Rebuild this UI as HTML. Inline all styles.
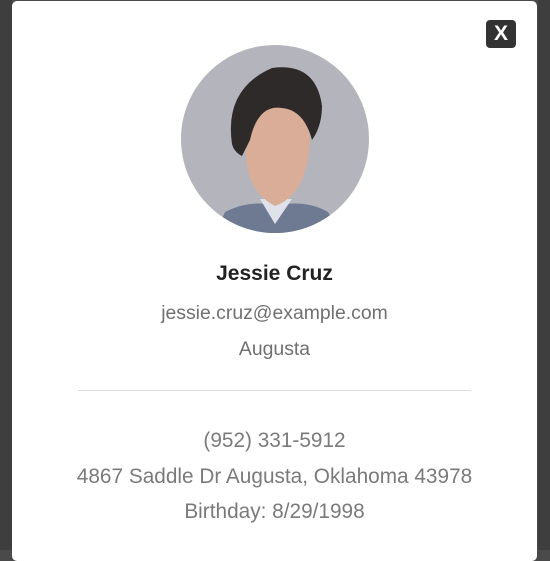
<!DOCTYPE html>
<html><head><style>
html,body{margin:0;padding:0;width:550px;height:550px;overflow:hidden;background:#4a4a4a;font-family:"Liberation Sans",sans-serif;}
.modal{position:absolute;left:12px;top:1px;width:525px;height:560px;background:#fff;border-radius:5px;}
.close{position:absolute;left:474px;top:19px;width:30px;height:28px;background:#333;border-radius:4px;color:#fff;font-weight:bold;font-size:21px;text-align:center;line-height:28px;}
.t{position:absolute;left:0;width:525px;text-align:center;}
</style></head><body>
<div style="position:absolute;left:0;top:0;width:12px;height:550px;background:#3e3e3e"></div>
<div class="modal">
<div class="close">X</div>
<svg style="position:absolute;left:168px;top:43px" width="190" height="190" viewBox="0 0 190 190">
<defs><clipPath id="c"><circle cx="95" cy="95" r="94"/></clipPath></defs>
<g clip-path="url(#c)">
<rect width="190" height="190" fill="#b4b5bc"/>
<path d="M35 190 L45 168 Q70 155 95 162 Q125 155 148 168 L160 190Z" fill="#6d7a92"/>
<path d="M80 155 L95 180 L112 155Z" fill="#dfe2ea"/>
<path d="M66 95 Q62 145 95 162 Q128 150 130 95 Q126 60 98 58 Q70 60 66 95Z" fill="#d9ad98"/>
<path d="M52 100 Q44 45 92 24 Q136 18 142 62 Q142 82 132 96 Q124 66 102 64 Q78 60 70 96 L62 112 Q54 108 52 100Z" fill="#2f2a2a"/>
</g></svg>
<div class="t" style="top:261px;font-size:21px;font-weight:bold;color:#222">Jessie Cruz</div>
<div class="t" style="top:301px;font-size:19.4px;color:#707070">jessie.cruz@example.com</div>
<div class="t" style="top:337px;font-size:19.4px;color:#707070">Augusta</div>
<div style="position:absolute;left:66px;top:389px;width:393px;height:1px;background:#ddd"></div>
<div class="t" style="top:428px;font-size:20.8px;color:#7a7a7a">(952) 331-5912</div>
<div class="t" style="top:464px;font-size:20.8px;color:#7a7a7a">4867 Saddle Dr Augusta, Oklahoma 43978</div>
<div class="t" style="top:499px;font-size:20.8px;color:#7a7a7a">Birthday: 8/29/1998</div>
</div>
<div style="position:absolute;left:538px;top:0;width:12px;height:550px;background:#3e3e3e"></div>
</body></html>
